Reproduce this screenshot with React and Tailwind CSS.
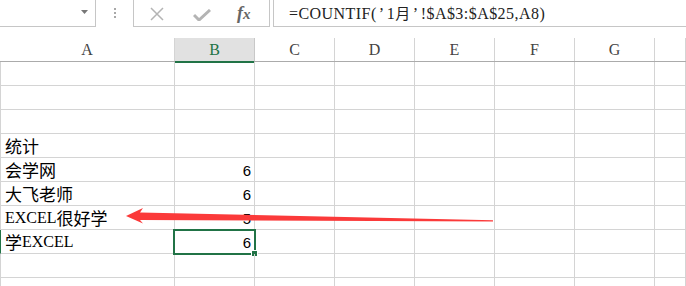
import React from "react";

function C({ children }) {
  return <span className="[font-family:'Noto_Sans_CJK_SC',sans-serif] text-[17px] leading-none">{children}</span>;
}
function L({ children }) {
  return <span className="[font-family:'Liberation_Serif',serif] text-[16px] leading-none">{children}</span>;
}

const cols = ["A", "B", "C", "D", "E", "F", "G", ""];

const rows = [
  { a: null, b: null },
  { a: null, b: null },
  { a: null, b: null },
  { a: <C>统计</C>, b: null },
  { a: <C>会学网</C>, b: "6" },
  { a: <C>大飞老师</C>, b: "6" },
  { a: (<><L>EXCEL</L><C>很好学</C></>), b: "5" },
  { a: (<><C>学</C><L>EXCEL</L></>), b: "6", sel: true },
  { a: null, b: null },
  { a: null, b: null },
];

export default function App() {
  return (
    <div className="relative w-[686px] h-[286px] overflow-hidden bg-white text-black">
      {/* toolbar */}
      <div className="flex h-[27px]">
        <div className="relative w-[96px] h-[27px] border-r border-b border-[#c6c6c6] bg-white">
          <svg className="absolute left-[81px] top-[10px]" width="7" height="4" viewBox="0 0 7 4">
            <polygon points="0,0 7,0 3.5,4" fill="#777" />
          </svg>
        </div>
        <div className="w-[37px] flex flex-col items-center justify-center gap-[2px] pb-[1px]">
          <div className="w-[2px] h-[2px] bg-[#a8a8a8]" />
          <div className="w-[2px] h-[2px] bg-[#a8a8a8]" />
          <div className="w-[2px] h-[2px] bg-[#a8a8a8]" />
        </div>
        <div className="relative w-[137px] h-[27px] border-l border-r border-b border-[#c6c6c6]">
          <svg className="absolute left-[15px] top-[7px]" width="16" height="14" viewBox="0 0 16 14">
            <path d="M2 1 L14 13 M14 1 L2 13" stroke="#b4b4b4" strokeWidth="1.5" fill="none" />
          </svg>
          <svg className="absolute left-[59px] top-[9px]" width="18" height="12" viewBox="0 0 18 12">
            <path d="M1 6 L6 11 L17 1" stroke="#b4b4b4" strokeWidth="3" fill="none" />
          </svg>
          <span className="absolute left-[103px] top-[1px] [font-family:'Liberation_Serif',serif] italic font-bold text-[18px] leading-[24px] text-[#666]">
            f<span className="text-[15px]">x</span>
          </span>
        </div>
        <div className="w-[3px]" />
        <div className="flex-1 h-[27px] border-l border-b border-[#c6c6c6] pl-[15px] flex items-center">
          <span className="[font-family:'Liberation_Serif',serif] text-[16px] tracking-[0.45px] text-[#222] whitespace-nowrap leading-none">
            =COUNTIF(<span className="inline-block w-[10px] text-center">’</span>1
            <span className="[font-family:'Noto_Sans_CJK_SC',sans-serif] text-[15px]">月</span>
            <span className="inline-block w-[10px] text-center">’</span>!$A$3:$A$25,A8)
          </span>
        </div>
      </div>

      <div className="h-[11px]" />

      {/* column headers */}
      <div className="grid grid-cols-[175px_80px_80px_80px_80px_80px_80px_1fr] h-[24px] border-b border-[#ababab]">
        {cols.map((c, i) => (
          <div
            key={i}
            className={
              i === 1
                ? "relative bg-[#e1e1e1] border-r border-[#c8c8c8] flex items-end justify-center pb-[3px]"
                : "border-r border-[#d4d4d4] flex items-end justify-center pb-[3px]"
            }
          >
            <span
              className={
                i === 1
                  ? "[font-family:'Liberation_Serif',serif] text-[16px] leading-none text-[#217346]"
                  : "[font-family:'Liberation_Serif',serif] text-[16px] leading-none text-[#444]"
              }
            >
              {c}
            </span>
            {i === 1 && <div className="absolute left-0 right-0 -bottom-[2px] h-[2px] bg-[#217346]" />}
          </div>
        ))}
      </div>

      {/* rows */}
      {rows.map((r, ri) => (
        <div key={ri} className="grid grid-cols-[175px_80px_80px_80px_80px_80px_80px_1fr] h-[24px]">
          <div
            className={
              r.sel
                ? "border-r border-b border-l border-[#d4d4d4] border-l-[#217346] flex items-end pl-[4px] pb-[3px] whitespace-nowrap"
                : "border-r border-b border-l border-[#d4d4d4] flex items-end pl-[4px] pb-[3px] whitespace-nowrap"
            }
          >
            {r.a}
          </div>
          <div className="relative border-r border-b border-[#d4d4d4] flex items-end justify-end pr-[3px] pb-[3px]">
            {r.b && (
              <span className="[font-family:'Liberation_Sans',sans-serif] text-[15px] leading-none">{r.b}</span>
            )}
            {r.sel && (
              <>
                <div className="absolute -left-[2px] -top-[1px] w-[83px] h-[26px] border-2 border-[#217346]" />
                <div className="absolute left-[76px] top-[20px] w-[7px] h-[7px] bg-[#217346] border border-white" />
              </>
            )}
          </div>
          {[0, 1, 2, 3, 4, 5].map((k) => (
            <div key={k} className="border-r border-b border-[#d4d4d4]" />
          ))}
        </div>
      ))}

      {/* red arrow overlay */}
      <svg className="absolute left-0 top-0 pointer-events-none" width="686" height="286" viewBox="0 0 686 286">
        <polygon
          points="126,216 143,208 140,212.5 493,220.3 493,221.6 140,220 143,223.5"
          fill="#fb3a3a"
        />
      </svg>
    </div>
  );
}
